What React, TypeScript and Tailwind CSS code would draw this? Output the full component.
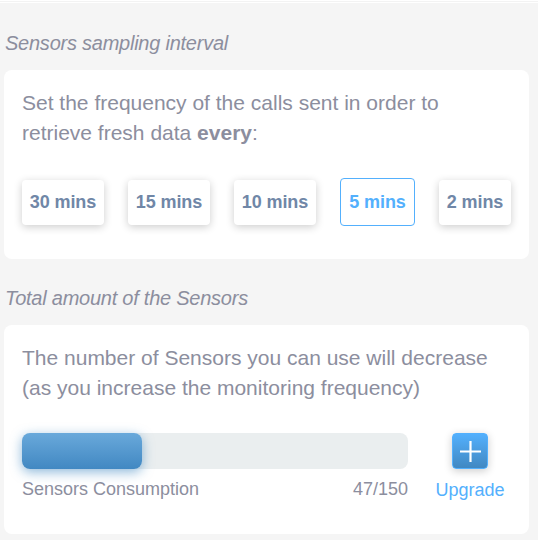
import React, { useState } from 'react';
import clsx from 'clsx';

const intervals = [
  { minutes: 30, width: 'w-[82px]' },
  { minutes: 15, width: 'w-[82px]' },
  { minutes: 10, width: 'w-[82px]' },
  { minutes: 5, width: 'w-[72px]' },
  { minutes: 2, width: 'w-[72px]' },
];

const used = 47;
const total = 150;

function SectionTitle({ children }: { children: React.ReactNode }) {
  return (
    <h2 className="pl-[5px] text-xl leading-[30px] tracking-[-0.24px] italic">{children}</h2>
  );
}

export default function App() {
  const [selected, setSelected] = useState(5);

  return (
    <div className="h-[540px] w-[538px] overflow-hidden bg-[#f5f5f5] font-['Liberation_Sans',Arial,sans-serif] text-[#8c8e9e]">
      <div className="h-[3px] border-b border-white bg-white">
        <div className="h-[2px] border-b border-[#f3f3f3]" />
      </div>

      <section className="pt-[25px]">
        <SectionTitle>Sensors sampling interval</SectionTitle>
        <div className="mt-3 ml-1 h-[189px] w-[525px] rounded-lg bg-white px-[18px] pt-[18px]">
          <p className="text-[21px] leading-[30px]">
            Set the frequency of the calls sent in order to
            <br />
            retrieve fresh data <b>every</b>:
          </p>
          <div className="mt-[30px] flex h-[48px] items-center gap-6">
            {intervals.map(({ minutes, width }) => (
              <button
                key={minutes}
                onClick={() => setSelected(minutes)}
                className={clsx(
                  'shrink-0 rounded bg-white text-lg leading-none font-bold tracking-[-0.1px] whitespace-nowrap',
                  minutes === selected
                    ? 'h-[48px] w-[75px] border border-[#53b0fd] text-[#53b0fd]'
                    : ['h-[45px] text-[#7087a7] shadow-[0_2px_8px_rgba(0,0,0,0.2)]', width]
                )}
              >
                {minutes} mins
              </button>
            ))}
          </div>
        </div>
      </section>

      <section className="pt-6">
        <SectionTitle>Total amount of the Sensors</SectionTitle>
        <div className="mt-3 ml-1 h-[209px] w-[525px] rounded-lg bg-white px-[18px] pt-[18px]">
          <p className="text-[21px] leading-[30px]">
            The number of Sensors you can use will decrease
            <br />
            (as you increase the monitoring frequency)
          </p>
          <div className="mt-[30px] flex">
            <div className="w-[386px]">
              <div className="h-9 rounded-lg bg-[#eaeeef]">
                <div
                  className="h-full rounded-lg bg-linear-to-b from-[#69a9db] to-[#4188c2] shadow-[0_3px_12px_rgba(65,136,194,0.6)]"
                  style={{ width: Math.floor((used / total) * 386) }}
                />
              </div>
              <div className="flex justify-between pt-[6px] text-lg leading-7">
                <span>Sensors Consumption</span>
                <span>
                  {used}/{total}
                </span>
              </div>
            </div>
            <button className="ml-[27px] flex w-[70px] flex-col items-center text-[#53b0fd]">
              <span className="flex size-9 items-center justify-center rounded border border-[#53b0fd] bg-linear-to-b from-[#53b0fd] to-[#4188c2] shadow-[0_2px_8px_rgba(0,0,0,0.2)]">
                <svg width="22" height="22" viewBox="0 0 22 22" className="text-white">
                  <path d="M11.5 1v21M1 11.5h21" stroke="currentColor" strokeWidth="2.2" />
                </svg>
              </span>
              <span className="pt-[7px] text-lg leading-7">Upgrade</span>
            </button>
          </div>
        </div>
      </section>
    </div>
  );
}
